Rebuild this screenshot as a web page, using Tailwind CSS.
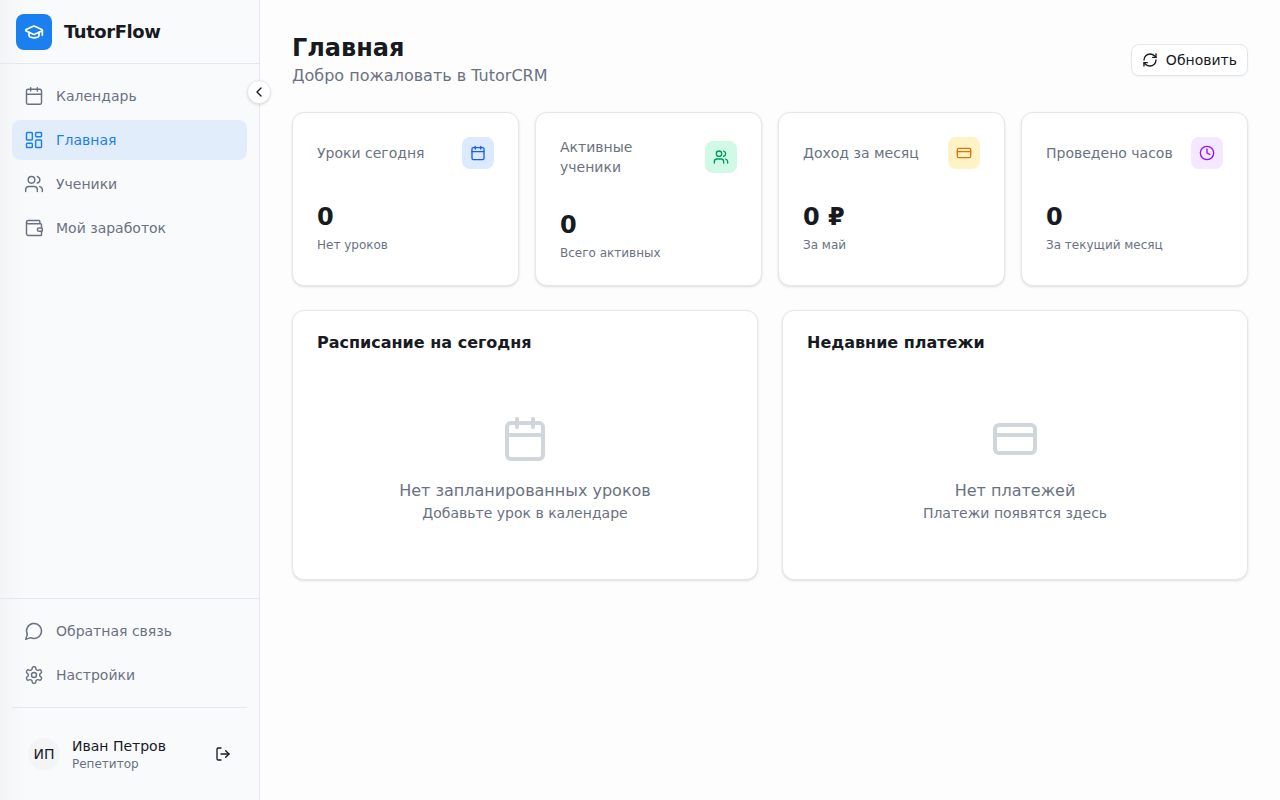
<!DOCTYPE html>
<html lang="ru">
<head>
    <meta charset="UTF-8">
    <title>TutorFlow</title>
    <script src="https://cdn.jsdelivr.net/npm/@tailwindcss/browser@4"></script>
</head>
<body class="h-[800px] overflow-hidden bg-[#fdfdfd] font-['DejaVu_Sans',sans-serif] text-[#171a1f]">
<div class="flex h-[800px]">
    <!-- sidebar -->
    <aside class="relative flex w-[260px] shrink-0 flex-col border-r border-[#e4e7ec] bg-[linear-gradient(90deg,#f3f4f6_0px,#f9fafc_24px)]">
        <div class="flex h-16 items-center gap-3 border-b border-[#e4e7ec] px-4">
            <div class="flex h-9 w-9 items-center justify-center rounded-lg bg-[#1a80f0] text-white">
                <svg class="h-5 w-5" viewBox="0 0 24 24" fill="none" stroke="currentColor" stroke-width="2" stroke-linecap="round" stroke-linejoin="round"><path d="M21.42 10.922a1 1 0 0 0-.019-1.838L12.83 5.18a2 2 0 0 0-1.66 0L2.6 9.08a1 1 0 0 0 0 1.832l8.57 3.908a2 2 0 0 0 1.66 0z"/><path d="M22 10v6"/><path d="M6 12.5V16a6 3 0 0 0 12 0v-3.5"/></svg>
            </div>
            <span class="text-lg font-bold tracking-tight">TutorFlow</span>
        </div>

        <button class="absolute left-[247px] top-[80px] flex h-6 w-6 items-center justify-center rounded-full border border-[#e4e7ec] bg-white shadow-sm">
            <svg class="h-4 w-4" viewBox="0 0 24 24" fill="none" stroke="currentColor" stroke-width="2" stroke-linecap="round" stroke-linejoin="round"><path d="m15 18-6-6 6-6"/></svg>
        </button>

        <nav class="flex flex-col gap-1 px-3 pt-3 text-sm text-gray-500">
            <a class="flex h-10 items-center gap-3 rounded-lg px-3">
                <svg class="h-5 w-5" viewBox="0 0 24 24" fill="none" stroke="currentColor" stroke-width="1.75" stroke-linecap="round" stroke-linejoin="round"><path d="M8 2v4"/><path d="M16 2v4"/><rect x="3" y="4" width="18" height="18" rx="2"/><path d="M3 10h18"/></svg>
                Календарь
            </a>
            <a class="flex h-10 items-center gap-3 rounded-lg bg-[#e2edfb] px-3 text-[#1a80f0]">
                <svg class="h-5 w-5" viewBox="0 0 24 24" fill="none" stroke="currentColor" stroke-width="1.75" stroke-linecap="round" stroke-linejoin="round"><rect x="3" y="3" width="7" height="9" rx="1"/><rect x="14" y="3" width="7" height="5" rx="1"/><rect x="14" y="12" width="7" height="9" rx="1"/><rect x="3" y="16" width="7" height="5" rx="1"/></svg>
                Главная
            </a>
            <a class="flex h-10 items-center gap-3 rounded-lg px-3">
                <svg class="h-5 w-5" viewBox="0 0 24 24" fill="none" stroke="currentColor" stroke-width="1.75" stroke-linecap="round" stroke-linejoin="round"><path d="M16 21v-2a4 4 0 0 0-4-4H6a4 4 0 0 0-4 4v2"/><circle cx="9" cy="7" r="4"/><path d="M22 21v-2a4 4 0 0 0-3-3.87"/><path d="M16 3.13a4 4 0 0 1 0 7.75"/></svg>
                Ученики
            </a>
            <a class="flex h-10 items-center gap-3 rounded-lg px-3">
                <svg class="h-5 w-5" viewBox="0 0 24 24" fill="none" stroke="currentColor" stroke-width="1.75" stroke-linecap="round" stroke-linejoin="round"><path d="M19 7V4a1 1 0 0 0-1-1H5a2 2 0 0 0 0 4h15a1 1 0 0 1 1 1v4h-3a2 2 0 0 0 0 4h3a1 1 0 0 0 1-1v-2a1 1 0 0 0-1-1"/><path d="M3 5v14a2 2 0 0 0 2 2h15a1 1 0 0 0 1-1v-4"/></svg>
                Мой заработок
            </a>
        </nav>

        <div class="mt-auto border-t border-[#e4e7ec] px-3 pt-3">
            <div class="flex flex-col gap-1 text-sm text-gray-500">
                <a class="flex h-10 items-center gap-3 rounded-lg px-3">
                    <svg class="h-5 w-5" viewBox="0 0 24 24" fill="none" stroke="currentColor" stroke-width="1.75" stroke-linecap="round" stroke-linejoin="round"><path d="M7.9 20A9 9 0 1 0 4 16.1L2 22Z"/></svg>
                    Обратная связь
                </a>
                <a class="flex h-10 items-center gap-3 rounded-lg px-3">
                    <svg class="h-5 w-5" viewBox="0 0 24 24" fill="none" stroke="currentColor" stroke-width="1.75" stroke-linecap="round" stroke-linejoin="round"><path d="M12.22 2h-.44a2 2 0 0 0-2 2v.18a2 2 0 0 1-1 1.73l-.43.25a2 2 0 0 1-2 0l-.15-.08a2 2 0 0 0-2.73.73l-.22.38a2 2 0 0 0 .73 2.73l.15.1a2 2 0 0 1 1 1.72v.51a2 2 0 0 1-1 1.74l-.15.09a2 2 0 0 0-.73 2.73l.22.38a2 2 0 0 0 2.73.73l.15-.08a2 2 0 0 1 2 0l.43.25a2 2 0 0 1 1 1.73V20a2 2 0 0 0 2 2h.44a2 2 0 0 0 2-2v-.18a2 2 0 0 1 1-1.73l.43-.25a2 2 0 0 1 2 0l.15.08a2 2 0 0 0 2.73-.73l.22-.39a2 2 0 0 0-.73-2.73l-.15-.08a2 2 0 0 1-1-1.74v-.5a2 2 0 0 1 1-1.74l.15-.09a2 2 0 0 0 .73-2.73l-.22-.38a2 2 0 0 0-2.73-.73l-.15.08a2 2 0 0 1-2 0l-.43-.25a2 2 0 0 1-1-1.73V4a2 2 0 0 0-2-2z"/><circle cx="12" cy="12" r="3"/></svg>
                    Настройки
                </a>
            </div>
            <div class="mt-3 flex h-[93px] items-center border-t border-[#e4e7ec] px-4">
                <div class="flex h-8 w-8 items-center justify-center rounded-full bg-[#f3f4f6] text-sm">ИП</div>
                <div class="ml-3 flex-1 leading-none">
                    <p class="text-sm leading-5">Иван Петров</p>
                    <p class="text-xs leading-4 text-gray-500">Репетитор</p>
                </div>
                <svg class="h-4 w-4" viewBox="0 0 24 24" fill="none" stroke="currentColor" stroke-width="2" stroke-linecap="round" stroke-linejoin="round"><path d="M9 21H5a2 2 0 0 1-2-2V5a2 2 0 0 1 2-2h4"/><polyline points="16 17 21 12 16 7"/><line x1="21" y1="12" x2="9" y2="12"/></svg>
            </div>
        </div>
    </aside>

    <!-- content -->
    <main class="flex-1 p-8">
        <div class="flex items-center justify-between">
            <div>
                <h1 class="text-2xl leading-8 font-bold">Главная</h1>
                <p class="text-base leading-6 text-gray-500">Добро пожаловать в TutorCRM</p>
            </div>
            <button class="flex h-8 items-center gap-2 rounded-lg border border-[#e4e7ec] bg-white px-[10px] text-sm shadow-xs">
                <svg class="h-4 w-4" viewBox="0 0 24 24" fill="none" stroke="currentColor" stroke-width="2" stroke-linecap="round" stroke-linejoin="round"><path d="M3 12a9 9 0 0 1 9-9 9.75 9.75 0 0 1 6.74 2.74L21 8"/><path d="M21 3v5h-5"/><path d="M21 12a9 9 0 0 1-9 9 9.75 9.75 0 0 1-6.74-2.74L3 16"/><path d="M8 16H3v5"/></svg>
                Обновить
            </button>
        </div>

        <div class="mt-6 grid grid-cols-4 gap-4">
            <div class="rounded-xl border border-[#e4e7ec] bg-white p-6 shadow-sm">
                <div class="flex items-center justify-between gap-3">
                    <p class="text-sm leading-5 text-gray-500">Уроки сегодня</p>
                    <div class="flex h-8 w-8 shrink-0 items-center justify-center rounded-lg bg-blue-100 text-blue-600">
                        <svg class="h-4 w-4" viewBox="0 0 24 24" fill="none" stroke="currentColor" stroke-width="2" stroke-linecap="round" stroke-linejoin="round"><path d="M8 2v4"/><path d="M16 2v4"/><rect x="3" y="4" width="18" height="18" rx="2"/><path d="M3 10h18"/></svg>
                    </div>
                </div>
                <p class="mt-8 text-2xl leading-8 font-bold">0</p>
                <p class="mt-1 text-xs leading-4 text-gray-500">Нет уроков</p>
            </div>
            <div class="rounded-xl border border-[#e4e7ec] bg-white p-6 shadow-sm">
                <div class="flex items-center justify-between gap-3">
                    <p class="text-sm leading-5 text-gray-500">Активные ученики</p>
                    <div class="flex h-8 w-8 shrink-0 items-center justify-center rounded-lg bg-emerald-100 text-emerald-600">
                        <svg class="h-4 w-4" viewBox="0 0 24 24" fill="none" stroke="currentColor" stroke-width="2" stroke-linecap="round" stroke-linejoin="round"><path d="M16 21v-2a4 4 0 0 0-4-4H6a4 4 0 0 0-4 4v2"/><circle cx="9" cy="7" r="4"/><path d="M22 21v-2a4 4 0 0 0-3-3.87"/><path d="M16 3.13a4 4 0 0 1 0 7.75"/></svg>
                    </div>
                </div>
                <p class="mt-8 text-2xl leading-8 font-bold">0</p>
                <p class="mt-1 text-xs leading-4 text-gray-500">Всего активных</p>
            </div>
            <div class="rounded-xl border border-[#e4e7ec] bg-white p-6 shadow-sm">
                <div class="flex items-center justify-between gap-3">
                    <p class="text-sm leading-5 text-gray-500">Доход за месяц</p>
                    <div class="flex h-8 w-8 shrink-0 items-center justify-center rounded-lg bg-amber-100 text-amber-600">
                        <svg class="h-4 w-4" viewBox="0 0 24 24" fill="none" stroke="currentColor" stroke-width="2" stroke-linecap="round" stroke-linejoin="round"><rect x="2" y="5" width="20" height="14" rx="2"/><line x1="2" y1="10" x2="22" y2="10"/></svg>
                    </div>
                </div>
                <p class="mt-8 text-2xl leading-8 font-bold">0 ₽</p>
                <p class="mt-1 text-xs leading-4 text-gray-500">За май</p>
            </div>
            <div class="rounded-xl border border-[#e4e7ec] bg-white p-6 shadow-sm">
                <div class="flex items-center justify-between gap-3">
                    <p class="text-sm leading-5 text-gray-500">Проведено часов</p>
                    <div class="flex h-8 w-8 shrink-0 items-center justify-center rounded-lg bg-purple-100 text-purple-600">
                        <svg class="h-4 w-4" viewBox="0 0 24 24" fill="none" stroke="currentColor" stroke-width="2" stroke-linecap="round" stroke-linejoin="round"><circle cx="12" cy="12" r="10"/><polyline points="12 6 12 12 16 14"/></svg>
                    </div>
                </div>
                <p class="mt-8 text-2xl leading-8 font-bold">0</p>
                <p class="mt-1 text-xs leading-4 text-gray-500">За текущий месяц</p>
            </div>
        </div>

        <div class="mt-6 grid grid-cols-2 gap-6">
            <div class="rounded-xl border border-[#e4e7ec] bg-white p-6 shadow-sm">
                <h3 class="text-base leading-4 font-bold">Расписание на сегодня</h3>
                <div class="flex flex-col items-center pt-16 pb-8 text-center">
                    <svg class="h-12 w-12 text-gray-300" viewBox="0 0 24 24" fill="none" stroke="currentColor" stroke-width="2" stroke-linecap="round" stroke-linejoin="round"><path d="M8 2v4"/><path d="M16 2v4"/><rect x="3" y="4" width="18" height="18" rx="2"/><path d="M3 10h18"/></svg>
                    <p class="mt-4 text-base leading-6 text-gray-500">Нет запланированных уроков</p>
                    <p class="text-sm leading-5 text-gray-500">Добавьте урок в календаре</p>
                </div>
            </div>
            <div class="rounded-xl border border-[#e4e7ec] bg-white p-6 shadow-sm">
                <h3 class="text-base leading-4 font-bold">Недавние платежи</h3>
                <div class="flex flex-col items-center pt-16 pb-8 text-center">
                    <svg class="h-12 w-12 text-gray-300" viewBox="0 0 24 24" fill="none" stroke="currentColor" stroke-width="2" stroke-linecap="round" stroke-linejoin="round"><rect x="2" y="5" width="20" height="14" rx="2"/><line x1="2" y1="10" x2="22" y2="10"/></svg>
                    <p class="mt-4 text-base leading-6 text-gray-500">Нет платежей</p>
                    <p class="text-sm leading-5 text-gray-500">Платежи появятся здесь</p>
                </div>
            </div>
        </div>
    </main>
</div>
</body>
</html>
